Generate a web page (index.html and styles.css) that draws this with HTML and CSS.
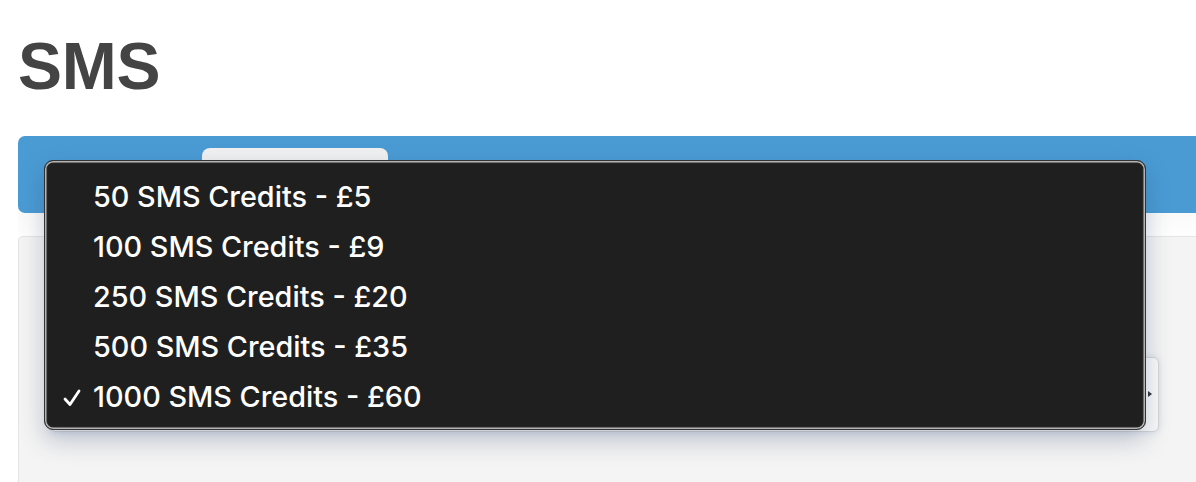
FILE: index.html
```html
<!DOCTYPE html>
<html>
<head>
<meta charset="utf-8">
<link rel="stylesheet" href="styles.css">
</head>
<body>
<div class="page">
  <h1 class="title">SMS</h1>
  <div class="tabs">
    <div class="tab tab-active"></div>
  </div>
  <div class="gap-strip"></div>
  <div class="panel">
    <div class="select-row">
      <div class="select-box"><span class="select-arrow"></span></div>
    </div>
  </div>
  <div class="menu">
    <div class="menu-item"><span class="check"></span>50 SMS Credits - £5</div>
    <div class="menu-item"><span class="check"></span>100 SMS Credits - £9</div>
    <div class="menu-item"><span class="check"></span>250 SMS Credits - £20</div>
    <div class="menu-item"><span class="check"></span>500 SMS Credits - £35</div>
    <div class="menu-item"><span class="check"><svg width="18" height="18" viewBox="0 0 18 18"><path d="M2 10 L7 15.5 L16 2" fill="none" stroke="#fff" stroke-width="2.8" stroke-linecap="round" stroke-linejoin="round"/></svg></span>1000 SMS Credits - £60</div>
  </div>
</div>
</body>
</html>
```
FILE: styles.css
```css
html, body {
  margin: 0;
  padding: 0;
  background: #fff;
  overflow: hidden;
}
.page {
  position: relative;
  width: 1196px;
  height: 482px;
  padding-left: 18px;
  box-sizing: border-box;
  font-family: "Liberation Sans", Arial, sans-serif;
}
.title {
  margin: 0;
  padding-top: 30px;
  height: 136px;
  box-sizing: border-box;
  font-size: 66px;
  line-height: 72px;
  font-weight: bold;
  color: #444;
  letter-spacing: -0.3px;
}
.tabs {
  height: 77px;
  background: #4a9bd4;
  border-radius: 7px 0 0 7px;
  display: flex;
  align-items: flex-end;
  padding-left: 184px;
}
.tab-active {
  width: 186px;
  height: 65px;
  background: #f1f1f1;
  border-radius: 8px 8px 0 0;
}
.gap-strip {
  height: 23px;
  background: linear-gradient(#fafafa, #fefefe);
}
.panel {
  height: 246px;
  background: #f4f4f4;
  border: 1px solid #e4e4e4;
  border-right: none;
  border-bottom: none;
  border-radius: 5px 0 0 0;
  box-sizing: border-box;
  padding-top: 120px;
}
.select-row {
  padding-left: 30px;
  padding-right: 37px;
}
.select-box {
  height: 73px;
  background: #fbfbfb;
  border: 1px solid #d6d6d6;
  border-radius: 6px;
  box-shadow: 0 0 6px rgba(120, 150, 200, 0.25);
  position: relative;
}
.select-arrow {
  position: absolute;
  right: 6px;
  top: 33px;
  width: 0;
  height: 0;
  border-left: 4px solid #333;
  border-top: 3px solid transparent;
  border-bottom: 3px solid transparent;
}
.menu {
  position: absolute;
  left: 44px;
  top: 160px;
  width: 1102px;
  height: 270px;
  box-sizing: border-box;
  background: #1f1f1f;
  border: 1px solid #333;
  border-radius: 9px;
  box-shadow: inset 0 0 0 1.5px #b4b4b4, inset 0 0 0 2.5px #2a2a2a, 0 10px 24px rgba(40, 60, 100, 0.28);
  padding-top: 11px;
  font-family: Inter, "Noto Sans", sans-serif;
  font-size: 28.8px;
  font-weight: 500;
  color: #fff;
}
.menu-item {
  height: 50px;
  line-height: 50px;
  display: flex;
  align-items: center;
  letter-spacing: 0;
}
.check {
  width: 48px;
  padding-left: 18px;
  box-sizing: border-box;
  display: flex;
  align-items: center;
  padding-top: 2px;
}
```
